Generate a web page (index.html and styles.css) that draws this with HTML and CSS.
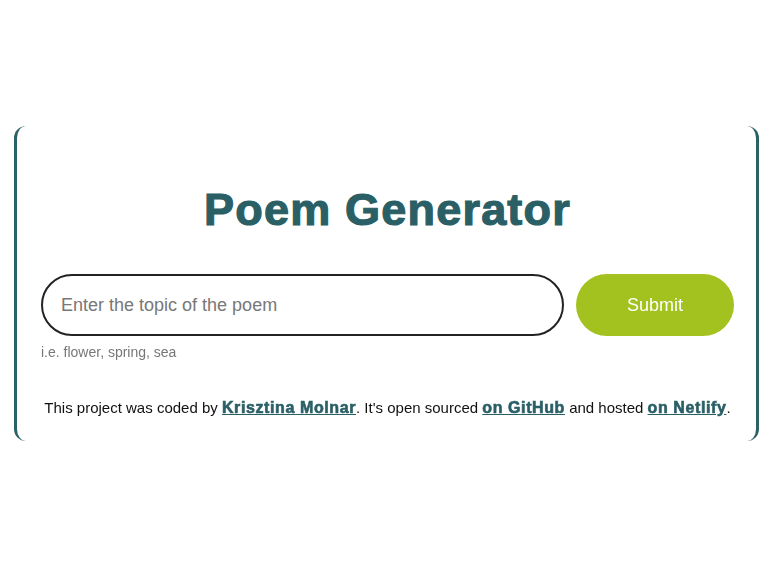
FILE: index.html
```html
<!DOCTYPE html>
<html lang="en">
<head>
<meta charset="utf-8">
<title>Poem Generator</title>
<link rel="stylesheet" href="styles.css">
</head>
<body>
<div class="container">
  <h1 class="title">Poem Generator</h1>
  <form class="search-form">
    <input class="topic-input" type="text" placeholder="Enter the topic of the poem" autofocus>
    <button class="submit-btn" type="button">Submit</button>
  </form>
  <p class="hint">i.e. flower, spring, sea</p>
  <footer class="footer">This project was coded by <a href="#">Krisztina Molnar</a>. It's open sourced <a href="#">on GitHub</a> and hosted <a href="#">on Netlify</a>.</footer>
</div>
</body>
</html>
```
FILE: styles.css
```css
html, body {
  margin: 0;
  padding: 0;
  background: #ffffff;
}
body {
  font-family: "Liberation Sans", Arial, sans-serif;
  color: #111;
}
.container {
  box-sizing: border-box;
  width: 745px;
  margin: 126px 0 0 14px;
  border-left: 3px solid #2c6167;
  border-right: 3px solid #2c6167;
  border-radius: 12px;
  padding: 0 22px 25px 24px;
}
.title {
  margin: 0;
  padding-top: 57px;
  font-family: "Liberation Sans", Arial, sans-serif;
  font-weight: 700;
  font-size: 45px;
  line-height: 53px;
  letter-spacing: 1.2px;
  color: #2a5f66;
  text-align: center;
  -webkit-text-stroke: 1.2px #2a5f66;
}
.search-form {
  display: flex;
  gap: 12px;
  margin-top: 38px;
}
.topic-input {
  flex: 1;
  box-sizing: border-box;
  height: 62px;
  border: 2px solid #222;
  border-radius: 31px;
  padding: 0 18px;
  font-family: "Liberation Sans", Arial, sans-serif;
  font-size: 18px;
  color: #222;
  outline: none;
  caret-color: #444;
}
.topic-input::placeholder {
  color: #777;
}
.submit-btn {
  box-sizing: border-box;
  width: 158px;
  height: 62px;
  border: none;
  border-radius: 31px;
  background: #a4c21f;
  color: #fff;
  font-family: "Liberation Sans", Arial, sans-serif;
  font-size: 18px;
}
.hint {
  margin: 8px 0 0;
  font-size: 14px;
  line-height: 16px;
  color: #777;
}
.footer {
  margin-top: 40px;
  font-size: 15px;
  line-height: 16px;
  text-align: center;
  color: #111;
}
.footer a {
  color: #2a5f66;
  font-weight: 700;
  font-size: 16px;
  letter-spacing: 0.6px;
  text-decoration: underline;
  -webkit-text-stroke: 0.6px #2a5f66;
}
```
